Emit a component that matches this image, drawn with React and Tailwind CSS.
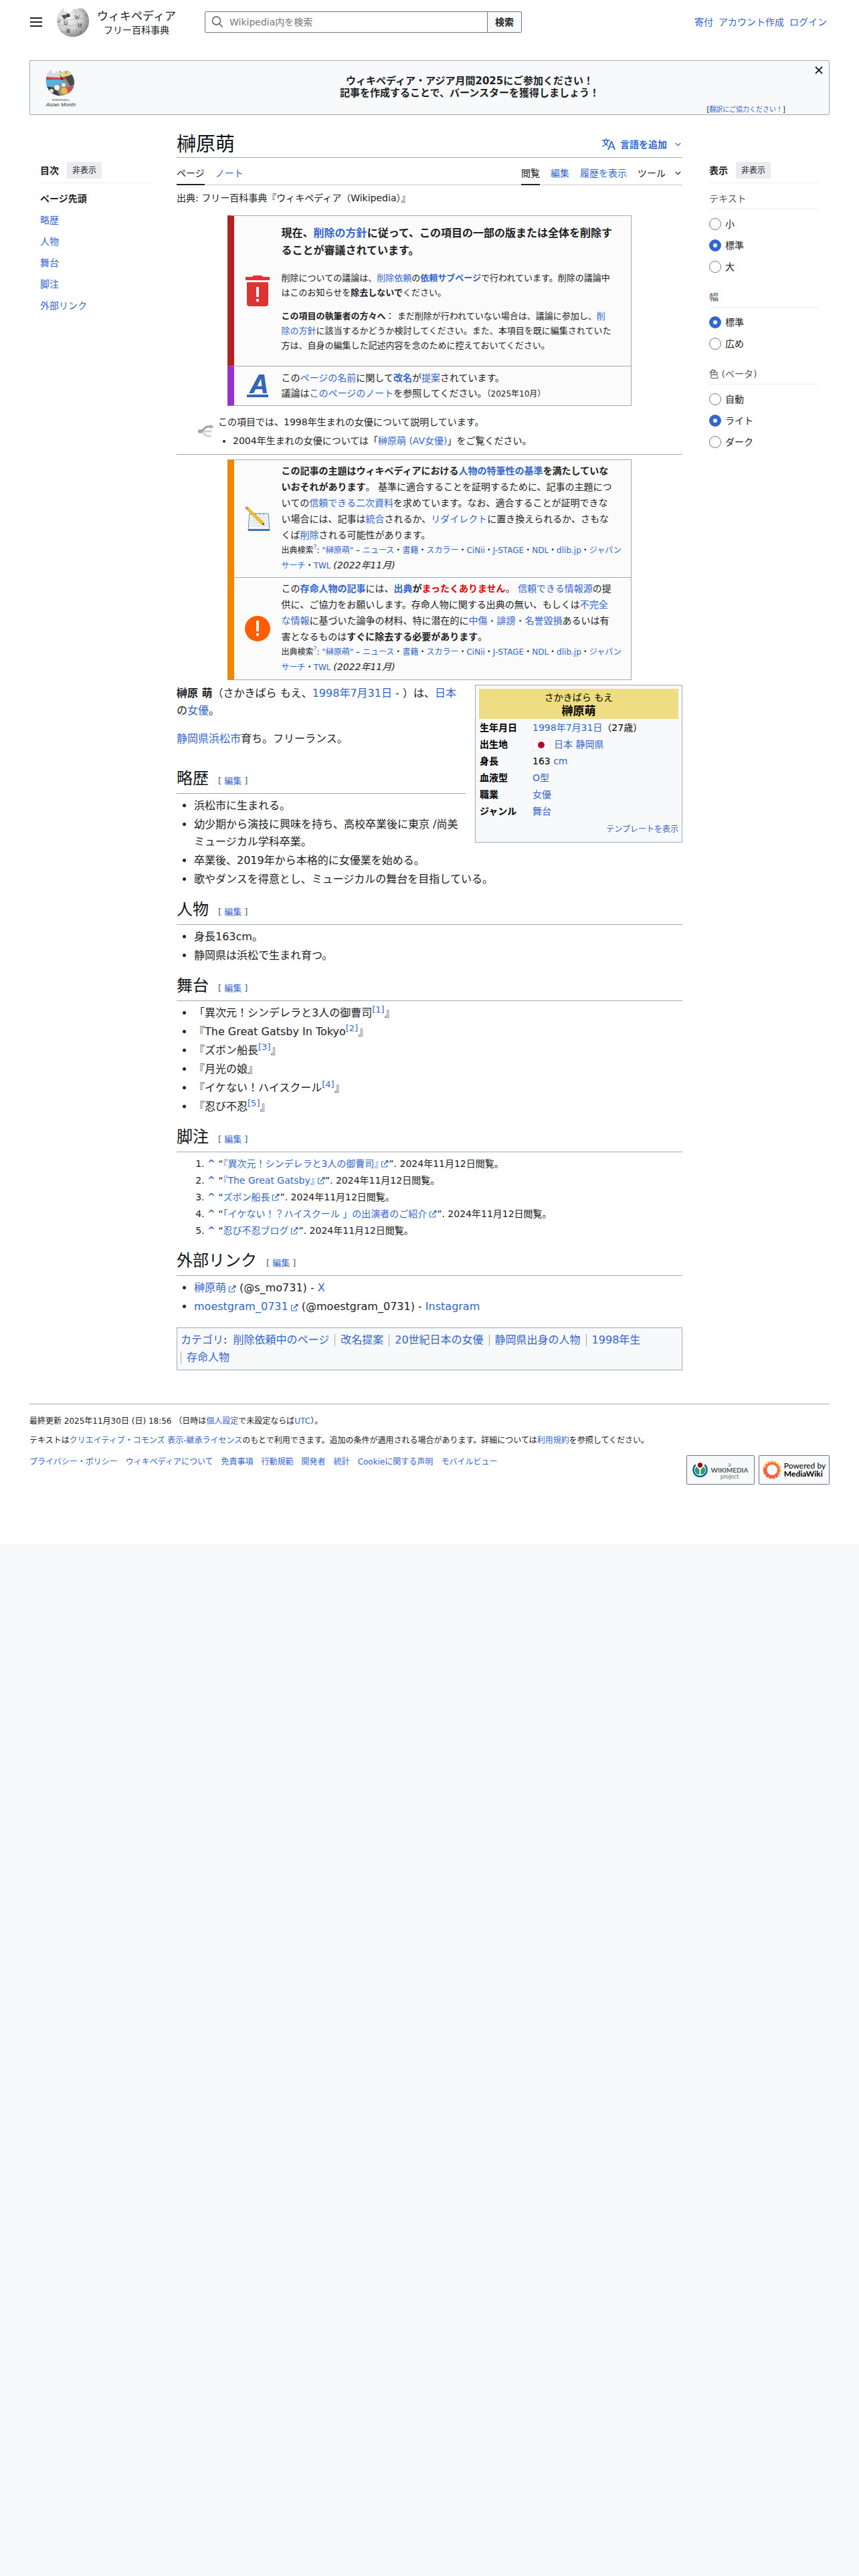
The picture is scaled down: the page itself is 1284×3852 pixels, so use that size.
const TOC = ['略歴', '人物', '舞台', '脚注', '外部リンク'];

const APPEARANCE = [
  { name: 'text', title: 'テキスト', options: ['小', '標準', '大'], value: '標準' },
  { name: 'width', title: '幅', options: ['標準', '広め'], value: '標準' },
  { name: 'color', title: '色 (ベータ)', options: ['自動', 'ライト', 'ダーク'], value: 'ライト' },
];

const SOURCES = ['ニュース', '書籍', 'スカラー', 'CiNii', 'J-STAGE', 'NDL', 'dlib.jp'];

const STAGE = [
  { pre: '「異次元！シンデレラと3人の御曹司', ref: 1 },
  { pre: '『The Great Gatsby In Tokyo', ref: 2 },
  { pre: '『ズボン船長', ref: 3 },
  { pre: '『月光の娘' },
  { pre: '『イケない！ハイスクール', ref: 4 },
  { pre: '『忍び不忍', ref: 5 },
];

const NOTES = [
  '『異次元！シンデレラと3人の御曹司』',
  '『The Great Gatsby』',
  'ズボン船長',
  '「イケない！？ハイスクール 」の出演者のご紹介',
  '忍び不忍ブログ',
];

const CATEGORIES = ['削除依頼中のページ', '改名提案', '20世紀日本の女優', '静岡県出身の人物', '1998年生', '存命人物'];

const FOOTER_LINKS = [
  'プライバシー・ポリシー',
  'ウィキペディアについて',
  '免責事項',
  '行動規範',
  '開発者',
  '統計',
  'Cookieに関する声明',
  'モバイルビュー',
];

function A({ children, className = '' }) {
  return (
    <a href="#" className={`text-[#3366cc] hover:underline ${className}`}>
      {children}
    </a>
  );
}

function Chevron() {
  return (
    <svg viewBox="0 0 10 6" className="h-[6px] w-[9px]" fill="none" stroke="currentColor" strokeWidth="1.3">
      <path d="M1 .8l4 4 4-4" />
    </svg>
  );
}

// link with the "opens elsewhere" mark sitting in its right padding
function ExternalLink({ children }) {
  return (
    <a href="#" className="relative pr-[15px] text-[#3366cc] hover:underline">
      {children}
      <svg viewBox="0 0 12 12" className="absolute right-0 bottom-[2px] h-3 w-3" fill="none" stroke="#3366cc">
        <path d="M4.5 3H1.5v8h8V7.5" />
        <path d="M7 1h4.5v4.5z" fill="#3366cc" stroke="none" />
        <path d="M5 7.5L10 2.5" strokeWidth="1.6" />
      </svg>
    </a>
  );
}

function Globe() {
  return (
    <svg viewBox="0 0 50 46" className="h-[46px] w-[50px]" aria-hidden="true">
      <defs>
        <radialGradient id="globe" cx="35%" cy="35%" r="70%">
          <stop offset="0" stopColor="#f5f5f5" />
          <stop offset="0.6" stopColor="#cfcfcf" />
          <stop offset="1" stopColor="#808080" />
        </radialGradient>
      </defs>
      <path
        d="M9 4c-5 5-8 11-8 18 0 13 11 23 24 23s24-10 24-23c0-8-3-15-9-19l-6-1-3 2-5-1-3 5-4 2-4-3-3 1-1-6z"
        fill="url(#globe)"
      />
      <path d="M8 13l7-1 2-2 3 1 1 4-5 1-4 3-2-3z" fill="#444" />
      <path
        d="M2 18q10 3 23 1t22-2M2 27q12 3 24 1t22-3M6 37q10 2 20 0t18-2M15 8q-4 18 4 35M29 5q5 20-1 40M40 5q6 16-1 34"
        fill="none"
        stroke="#a9a9a9"
        strokeWidth=".7"
      />
      <g fill="#3a3a3a" fontFamily="Liberation Serif, serif" fontSize="9">
        <text x="27" y="19">W</text>
        <text x="11" y="27">Ω</text>
        <text x="32" y="31">И</text>
        <text x="2" y="24" fontSize="7">ש</text>
        <text x="43" y="16" fontSize="7">7</text>
        <text x="15" y="38" fontSize="6" fontFamily="Noto Sans CJK JP, sans-serif">維</text>
        <text x="35" y="40" fontSize="7">?</text>
      </g>
    </svg>
  );
}

function AsianMonthLogo() {
  return (
    <svg viewBox="0 0 54 58" className="h-[58px] w-[54px]" role="img" aria-label="Wikipedia Asian Month">
      <clipPath id="ball">
        <path d="M11 2C5 7 3 13 4 21c1 11 10 19 21 19s21-8 21-19c0-8-4-15-9-18l-8 1-4 3-6-3-2 4-4-2z" />
      </clipPath>
      <g clipPath="url(#ball)">
        <path d="M0 0h54v42H0z" fill="#8c8f91" />
        <path d="M0 0h24v14H0z" fill="#d9dadb" />
        <path d="M22 0h32v13H24z" fill="#ecd28a" />
        <path d="M2 12l22 1 12-2v4l-14 2-20-1z" fill="#c8434f" />
        <path d="M4 17l14-1 12 1-3 6-8-1-5 5-10-1z" fill="#55b4dc" />
        <path d="M32 12l12-4 4 14-8 4z" fill="#4a4a4a" />
        <path d="M3 26l14 2 8 12H6z" fill="#3f4042" />
        <path d="M34 28l14-3-2 10-8 3z" fill="#c94a58" />
        <circle cx="20" cy="28" r="4" fill="#eee" />
        <circle cx="30" cy="24" r="3" fill="#e4e4e4" />
        <circle cx="12" cy="33" r="3" fill="#e9e9e9" />
        <circle cx="31" cy="33" r="5" fill="#f0b93a" />
        <path d="M24 8l6 9-3-1z" fill="#222" />
      </g>
      <path d="M24 3l2 3M35 3l-2 4" stroke="#3ba58c" strokeWidth="1.5" />
      <text x="26" y="48" textAnchor="middle" fontSize="5" fontFamily="Liberation Serif, serif" fill="#333">
        WIKIPEDIA
      </text>
      <text x="26" y="56" textAnchor="middle" fontSize="8" fontStyle="italic" fontFamily="Liberation Sans, sans-serif" fill="#333">
        Asian Month
      </text>
    </svg>
  );
}

function Header() {
  return (
    <header className="flex h-[66px] items-center">
      <button type="button" aria-label="メインメニュー" className="flex w-5 flex-col items-center gap-1">
        <span className="h-[2px] w-[18px] bg-[#202122]" />
        <span className="h-[2px] w-[18px] bg-[#202122]" />
        <span className="h-[2px] w-[18px] bg-[#202122]" />
      </button>
      <a href="#" className="ml-5 flex items-center gap-2" aria-label="ウィキペディア">
        <Globe />
        <span className="flex w-[124px] flex-col items-center text-[#202122]">
          <span className="text-[17px] leading-6 whitespace-nowrap">ウィキペディア</span>
          <span className="text-sm leading-[18px] whitespace-nowrap">フリー百科事典</span>
        </span>
      </a>
      <form className="ml-10 flex h-8 w-[474px]">
        <div className="flex flex-1 items-center rounded-l-[2px] border border-[#72777d] pl-2">
          <svg viewBox="0 0 20 20" className="h-5 w-5" fill="none" stroke="#72777d" strokeWidth="1.8">
            <circle cx="8.5" cy="8" r="6" />
            <path d="M12.8 12.4l5 5.2" />
          </svg>
          <input
            type="search"
            aria-label="Wikipedia内を検索"
            placeholder="Wikipedia内を検索"
            className="ml-2 h-full flex-1 text-sm outline-none placeholder:text-[#72777d]"
          />
        </div>
        <button
          type="button"
          className="-ml-px w-[52px] rounded-r-[2px] border border-[#72777d] bg-[#f8f9fa] text-sm font-bold"
        >
          検索
        </button>
      </form>
      <nav className="mr-1 ml-auto flex gap-2 text-sm">
        <A>寄付</A>
        <A>アカウント作成</A>
        <A>ログイン</A>
      </nav>
    </header>
  );
}

function Banner() {
  return (
    <section className="relative mt-6 flex h-[82px] justify-center rounded-[2px] border border-[#a2a9b1] bg-[#f8f9fa]">
      <div className="absolute top-3 left-5">
        <AsianMonthLogo />
      </div>
      <p className="ml-[120px] pt-[21px] text-center text-[15px] leading-[18px] font-bold">
        ウィキペディア・アジア月間2025にご参加ください！
        <br />
        記事を作成することで、バーンスターを獲得しましょう！
      </p>
      <button type="button" aria-label="閉じる" className="absolute top-2 right-[9px]">
        <svg viewBox="0 0 12 12" className="h-3 w-3" stroke="#202122" strokeWidth="1.8">
          <path d="M1 1l10 10M11 1L1 11" />
        </svg>
      </button>
      <p className="absolute right-[65px] bottom-0 text-[10px] leading-[15px]">
        [<A>翻訳にご協力ください！</A>]
      </p>
    </section>
  );
}

function PanelHead({ title }) {
  return (
    <div className="flex items-center gap-3 border-b border-[#eaecf0] pt-[6px] pb-[6px]">
      <span className="text-sm font-bold">{title}</span>
      <button type="button" className="h-[25px] bg-[#eaecf0] px-2 text-xs">
        非表示
      </button>
    </div>
  );
}

function Contents() {
  return (
    <aside className="pr-10 pl-4">
      <PanelHead title="目次" />
      <ul className="mt-[7px] text-sm leading-8">
        <li className="font-bold">
          <a href="#">ページ先頭</a>
        </li>
        {TOC.map((t) => (
          <li key={t}>
            <A>{t}</A>
          </li>
        ))}
      </ul>
    </aside>
  );
}

function Appearance() {
  return (
    <aside className="pr-4 pl-10">
      <PanelHead title="表示" />
      {APPEARANCE.map((g) => (
        <fieldset key={g.name} className="pb-[6px]">
          <legend className="w-full border-b border-[#eaecf0] pt-3 pb-1 text-sm leading-[22px] text-[#54595d]">
            {g.title}
          </legend>
          <div className="pt-[6px]">
            {g.options.map((o) => (
              <label key={o} className="flex h-8 items-center gap-[6px] text-sm">
                <input
                  type="radio"
                  name={g.name}
                  defaultChecked={o === g.value}
                  className="h-[18px] w-[18px] appearance-none rounded-full border border-[#72777d] bg-white checked:border-[6px] checked:border-[#3366cc]"
                />
                {o}
              </label>
            ))}
          </div>
        </fieldset>
      ))}
    </aside>
  );
}

function TitleRow() {
  return (
    <div className="col-start-2 flex h-10 items-center justify-between border-b border-[#a2a9b1]">
      <h1 className="text-[29px] leading-9 text-[#101418]">榊原萌</h1>
      <button type="button" className="flex items-center text-sm font-bold text-[#3366cc]">
        <svg viewBox="0 0 20 20" className="mr-[7px] h-5 w-5" fill="#3366cc">
          <path d="M20 18h-1.4a1 1 0 0 1-.6-.2 1 1 0 0 1-.4-.5l-1-2.8h-5.2l-1 2.8a1 1 0 0 1-.3.5 1 1 0 0 1-.7.2H8L13.1 5h1.8zM11.9 13.2h4.2l-1.6-4.4-.5-1.4-.5 1.5z" />
          <path d="M5 1v2H0v1.5h2.2c.3 2.1 1 3.900 2.300 5.400A13 13 0 0 1 0 12l.6 1.400a15 15 0 0 0 5-2.600c.8.700 1.700 1.300 2.700 1.700l.6-1.400a9 9 0 0 1-2.200-1.300C8 8.400 8.800 6.600 9.100 4.500H12V3H6.500V1zM3.700 4.500h3.900C7.300 6.200 6.600 7.600 5.600 8.800 4.600 7.600 3.900 6.200 3.700 4.500z" />
        </svg>
        言語を追加
        <span className="mr-[2px] ml-3">
          <Chevron />
        </span>
      </button>
    </div>
  );
}

function Tab({ active, children }) {
  return (
    <a
      href="#"
      className={`-mb-px flex h-[41px] items-center border-b-2 pt-[6px] ${
        active ? 'border-[#202122] text-[#202122]' : 'border-transparent text-[#3366cc]'
      }`}
    >
      {children}
    </a>
  );
}

function Tabs() {
  return (
    <div className="flex h-[41px] justify-between border-b border-[#c8ccd1] text-sm">
      <div className="flex gap-4">
        <Tab active>ページ</Tab>
        <Tab>ノート</Tab>
      </div>
      <div className="flex gap-4">
        <Tab active>閲覧</Tab>
        <Tab>編集</Tab>
        <Tab>履歴を表示</Tab>
        <button type="button" className="flex items-center gap-[14px] pt-[5px] pr-[2px]">
          ツール
          <Chevron />
        </button>
      </div>
    </div>
  );
}

function NoticeRow({ bar, icon, className, children }) {
  return (
    <div className={`-mt-px flex border border-l-10 border-[#a2a9b1] bg-[#fbfbfb] ${bar}`}>
      <div className="flex w-[71px] shrink-0 items-center justify-center">{icon}</div>
      <div className={`min-w-0 flex-1 whitespace-nowrap ${className}`}>{children}</div>
    </div>
  );
}

function FindSources() {
  return (
    <div className="text-xs leading-[23px]">
      出典検索
      <sup className="top-[-6px] leading-none">
        <A>?</A>
      </sup>
      : <A>"榊原萌"</A> –{' '}
      {SOURCES.map((s) => (
        <span key={s}>
          <A>{s}</A>・
        </span>
      ))}
      <A>ジャパン</A>
      <br />
      <A>サーチ</A>・<A>TWL</A> <i className="text-sm leading-none">(2022年11月)</i>
    </div>
  );
}

function DeletionNotices() {
  return (
    <div className="mx-auto mt-4 w-4/5">
      <NoticeRow
        bar="border-l-[#b22222]"
        className="pt-[13px] pb-[19px] text-[13px] leading-[22px]"
        icon={
          <svg viewBox="0 0 36 48" className="h-12 w-9">
            <path d="M0 3h10l2-2h12l2 2h10v5H0z" fill="#dd3333" />
            <path d="M2 11h32v32a4 4 0 0 1-4 4H6a4 4 0 0 1-4-4z" fill="#dd3333" />
            <path d="M16 18h4v15h-4zM16 36h4v4h-4z" fill="#fff" />
          </svg>
        }
      >
        <p className="mb-[17px] text-base leading-[26px] font-bold">
          現在、<A>削除の方針</A>に従って、この項目の一部の版または全体を削除す
          <br />
          ることが審議されています。
        </p>
        <p className="mb-[13px]">
          削除についての議論は、<A>削除依頼</A>の<A className="font-bold">依頼サブページ</A>
          で行われています。削除の議論中
          <br />
          はこのお知らせを<b>除去しないで</b>ください。
        </p>
        <p>
          <b>この項目の執筆者の方々へ</b>： まだ削除が行われていない場合は、議論に参加し、<A>削</A>
          <br />
          <A>除の方針</A>に該当するかどうか検討してください。また、本項目を既に編集されていた
          <br />
          方は、自身の編集した記述内容を念のために控えておいてください。
        </p>
      </NoticeRow>
      <NoticeRow
        bar="border-l-[#9932cc]"
        className="pt-[6px] pb-[6px] text-sm leading-[23px]"
        icon={
          <svg viewBox="0 0 32 36" className="h-9 w-8" fill="#3366bb">
            <path d="M3 29L18 1h8l4 28h-6l-1-6h-10l-3 6zM15.500 18.500h7l-1.500-11z" />
            <path d="M0 31h32v4H0z" />
          </svg>
        }
      >
        この<A>ページの名前</A>に関して<A className="font-bold">改名</A>が<A>提案</A>されています。
        <br />
        議論は<A>このページのノート</A>を参照してください。<span className="text-xs">（2025年10月）</span>
      </NoticeRow>
    </div>
  );
}

function Hatnote() {
  return (
    <div className="flex border-b border-[#a2a9b1] pt-3 pb-2 pl-8 text-sm leading-6">
      <svg viewBox="0 0 24 20" className="mt-4 mr-[6px] h-5 w-6" fill="none">
        <path d="M3 10c5 0 6 7 12 7h5M7 10h13" stroke="#d0d2d4" strokeWidth="3" />
        <path d="M3 10c6 0 5-7 12-7h4" stroke="#a2a5a8" strokeWidth="3" />
        <circle cx="3" cy="10" r="3" fill="#a2a5a8" />
        <path d="M18 0l6 3-6 3z" fill="#a2a5a8" />
      </svg>
      <div>
        <p>この項目では、1998年生まれの女優について説明しています。</p>
        <ul className="mt-1 ml-[22px] list-disc">
          <li>
            2004年生まれの女優については「<A>榊原萌 (AV女優)</A>」をご覧ください。
          </li>
        </ul>
      </div>
    </div>
  );
}

function ContentNotices() {
  return (
    <div className="mx-auto mt-2 w-4/5">
      <NoticeRow
        bar="border-l-[#f28500]"
        className="pt-1 pb-[5px] text-sm leading-6"
        icon={
          <svg viewBox="0 0 38 38" className="h-[38px] w-[38px]">
            <path d="M7 11h28l2 24H5z" fill="#f4f5f6" stroke="#5b86b8" />
            <path d="M5 34h32v3H5z" fill="#3a75b5" />
            <path d="M9 17h25M9 21h25M9 25h26M8 29h28" stroke="#cfd3d6" />
            <path d="M10 10v4M16 10v4M22 10v4M28 10v4" stroke="#999" />
            <path d="M1 3l3-2L28 24l1 4-4-1z" fill="#f4c021" stroke="#b98a10" strokeWidth=".6" />
            <path d="M0 2l3-2 3 3-3 3z" fill="#d88" />
            <path d="M29 28l-3-1 2-2z" fill="#333" />
          </svg>
        }
      >
        <b>
          この記事の主題はウィキペディアにおける<A>人物の特筆性の基準</A>を満たしていな
          <br />
          いおそれがあります
        </b>
        。 基準に適合することを証明するために、記事の主題につ
        <br />
        いての<A>信頼できる二次資料</A>を求めています。なお、適合することが証明できな
        <br />
        い場合には、記事は<A>統合</A>されるか、<A>リダイレクト</A>に置き換えられるか、さもな
        <br />
        くば<A>削除</A>される可能性があります。
        <FindSources />
      </NoticeRow>
      <NoticeRow
        bar="border-l-[#f28500]"
        className="pt-1 pb-[6px] text-sm leading-6"
        icon={
          <svg viewBox="0 0 38 38" className="h-[38px] w-[38px]">
            <circle cx="19" cy="19" r="19" fill="#ff5d00" />
            <path d="M17 7h4v16h-4zM17 26h4v4h-4z" fill="#fff" />
          </svg>
        }
      >
        この<A className="font-bold">存命人物の記事</A>には、
        <b>
          <A>出典</A>が<span className="text-[#e60000]">まったくありません</span>
        </b>
        。 <A>信頼できる情報源</A>の提
        <br />
        供に、ご協力をお願いします。存命人物に関する出典の無い、もしくは<A>不完全</A>
        <br />
        <A>な情報</A>に基づいた論争の材料、特に潜在的に<A>中傷・誹謗・名誉毀損</A>あるいは有
        <br />
        害となるものは<b>すぐに除去する必要があります</b>。
        <FindSources />
      </NoticeRow>
    </div>
  );
}

function InfoRow({ label, children }) {
  return (
    <tr className="h-[25px]">
      <th scope="row" className="w-[80px] pl-px text-left font-bold">
        {label}
      </th>
      <td>{children}</td>
    </tr>
  );
}

function Infobox() {
  return (
    <div className="float-right mb-1 ml-[14px] w-[310px] border border-[#a2a9b1] bg-[#f8f9fa] p-[5px] text-sm leading-5 text-black">
      <table className="w-full">
        <caption className="h-[45px] bg-[#eedd82] pt-[3px] text-center leading-5">
          さかきばら もえ
          <br />
          <b className="text-[17px]">榊原萌</b>
        </caption>
        <tbody>
          <InfoRow label="生年月日">
            <A>1998年7月31日</A>（27歳）
          </InfoRow>
          <InfoRow label="出生地">
            <span className="mr-[6px] inline-flex h-[18px] w-[26px] items-center justify-center border border-[#eaecf0] bg-white align-middle">
              <span className="h-[10px] w-[10px] rounded-full bg-[#bc002d]" />
            </span>
            <A>日本</A> <A>静岡県</A>
          </InfoRow>
          <InfoRow label="身長">
            163 <A>cm</A>
          </InfoRow>
          <InfoRow label="血液型">
            <A>O型</A>
          </InfoRow>
          <InfoRow label="職業">
            <A>女優</A>
          </InfoRow>
          <InfoRow label="ジャンル">
            <A>舞台</A>
          </InfoRow>
        </tbody>
      </table>
      <p className="pt-[5px] pb-1 text-right text-xs leading-5">
        <A>テンプレートを表示</A>
      </p>
    </div>
  );
}

function Heading({ children }) {
  return (
    <div className="mt-4 mb-[5px] flex items-baseline border-b border-[#a2a9b1] pb-[6px]">
      <h2 className="text-2xl leading-8 text-[#101418]">{children}</h2>
      <span className="ml-[14px] text-[13px] leading-5 text-[#54595d]">
        [ <A>編集</A> ]
      </span>
    </div>
  );
}

function List({ children }) {
  return <ul className="ml-[26px] list-disc space-y-[2px]">{children}</ul>;
}

function Article() {
  return (
    <article className="mt-[7px] text-base leading-[26px]">
      <Infobox />
      <p className="mb-4">
        <b>榊原 萌</b>（さかきばら もえ、<A>1998年7月31日</A> - ）は、<A>日本</A>の<A>女優</A>。
      </p>
      <p className="mb-[30px]">
        <A>静岡県</A>
        <A>浜松市</A>育ち。フリーランス。
      </p>

      <Heading>略歴</Heading>
      <List>
        <li>浜松市に生まれる。</li>
        <li>幼少期から演技に興味を持ち、高校卒業後に東京 /尚美ミュージカル学科卒業。</li>
        <li>卒業後、2019年から本格的に女優業を始める。</li>
        <li>歌やダンスを得意とし、ミュージカルの舞台を目指している。</li>
      </List>

      <Heading>人物</Heading>
      <List>
        <li>身長163cm。</li>
        <li>静岡県は浜松で生まれ育つ。</li>
      </List>

      <Heading>舞台</Heading>
      <List>
        {STAGE.map((s) => (
          <li key={s.pre}>
            {s.pre}
            {s.ref && (
              <sup className="text-[13px]">
                <A>[{s.ref}]</A>
              </sup>
            )}
            』
          </li>
        ))}
      </List>

      <Heading>脚注</Heading>
      <ol className="ml-[46px] list-decimal text-sm leading-[25px]">
        {NOTES.map((n) => (
          <li key={n}>
            <A className="font-bold">^</A> “<ExternalLink>{n}</ExternalLink>
            ”. 2024年11月12日閲覧。
          </li>
        ))}
      </ol>

      <Heading>外部リンク</Heading>
      <List>
        <li>
          <ExternalLink>榊原萌</ExternalLink> (@s_mo731) - <A>X</A>
        </li>
        <li>
          <ExternalLink>moestgram_0731</ExternalLink> (@moestgram_0731) - <A>Instagram</A>
        </li>
      </List>

      <div className="mt-[18px] border border-[#a2a9b1] bg-[#f8f9fa] p-[5px]">
        <A>カテゴリ</A>:{' '}
        <ul className="inline">
          {CATEGORIES.map((c) => (
            <li
              key={c}
              className="inline-block border-l border-[#a2a9b1] px-2 leading-[18px] first:border-l-0 first:pl-1"
            >
              <A>{c}</A>
            </li>
          ))}
        </ul>
      </div>
    </article>
  );
}

function Footer() {
  return (
    <footer className="mt-[50px] border-t border-[#a2a9b1] pt-[15px] pb-[88px] text-xs leading-5">
      <p>
        最終更新 2025年11月30日 (日) 18:56 （日時は<A>個人設定</A>で未設定ならば<A>UTC</A>）。
      </p>
      <p className="mt-[9px]">
        テキストは<A>クリエイティブ・コモンズ 表示-継承ライセンス</A>
        のもとで利用できます。追加の条件が適用される場合があります。詳細については<A>利用規約</A>
        を参照してください。
      </p>
      <div className="mt-3 flex items-start justify-between">
        <ul className="flex flex-wrap gap-3">
          {FOOTER_LINKS.map((l) => (
            <li key={l}>
              <A>{l}</A>
            </li>
          ))}
        </ul>
        <div className="flex gap-[6px]">
          <a
            href="#"
            className="flex h-11 w-[102px] items-center justify-center gap-1 rounded-[2px] border border-[#72777d] bg-[#f8f9fa]"
          >
            <svg viewBox="0 0 24 24" className="h-6 w-[23px]" fill="none">
              <path d="M5 4a10.500 10.500 0 1 0 14 0" stroke="#006699" strokeWidth="2.500" />
              <path d="M7 7a6.500 6.500 0 0 0 4 12V12zM17 7a6.500 6.500 0 0 1-4 12V12z" fill="#339966" />
              <circle cx="12" cy="4.500" r="3.800" fill="#990000" />
            </svg>
            <span className="flex flex-col items-center font-['Lato',sans-serif] text-[9px] leading-[9px] text-[#72777d]">
              <span>a</span>
              <span className="text-[10px] font-bold text-[#54595d]">WIKIMEDIA</span>
              <span>project</span>
            </span>
          </a>
          <a
            href="#"
            className="flex h-11 w-[106px] items-center justify-center gap-1 rounded-[2px] border border-[#72777d] bg-[#f8f9fa]"
          >
            <svg viewBox="0 0 28 28" className="h-7 w-7" fill="none">
              <circle cx="14" cy="14" r="11" stroke="#f9a72b" strokeWidth="5" strokeDasharray="3.500 1" />
              <path d="M4 12a10.500 10.500 0 0 0 18 9" stroke="#e2407a" strokeWidth="5" strokeDasharray="3.500 1" />
              <circle cx="14" cy="14" r="9.500" stroke="#f4663b" strokeWidth="3" />
            </svg>
            <span className="font-['Lato',sans-serif] text-[12px] leading-[12px] text-black">
              Powered by
              <br />
              <b>MediaWiki</b>
            </span>
          </a>
        </div>
      </div>
    </footer>
  );
}

export default function App() {
  return (
    <div className="min-h-screen bg-[#f8f9fa] font-['DejaVu_Sans','Noto_Sans_CJK_JP',sans-serif] text-[#202122]">
      <div className="bg-white px-11" lang="ja">
        <Header />
        <Banner />
        <div className="mt-6 grid grid-cols-[220px_minmax(0,1fr)_220px]">
          <TitleRow />
          <div className="col-start-1 row-start-2">
            <Contents />
          </div>
          <main className="row-start-2">
            <Tabs />
            <p className="mt-2 text-sm leading-[22px]">
              出典: フリー百科事典『ウィキペディア（Wikipedia）』
            </p>
            <DeletionNotices />
            <Hatnote />
            <ContentNotices />
            <Article />
          </main>
          <div className="row-start-2">
            <Appearance />
          </div>
        </div>
        <Footer />
      </div>
    </div>
  );
}
